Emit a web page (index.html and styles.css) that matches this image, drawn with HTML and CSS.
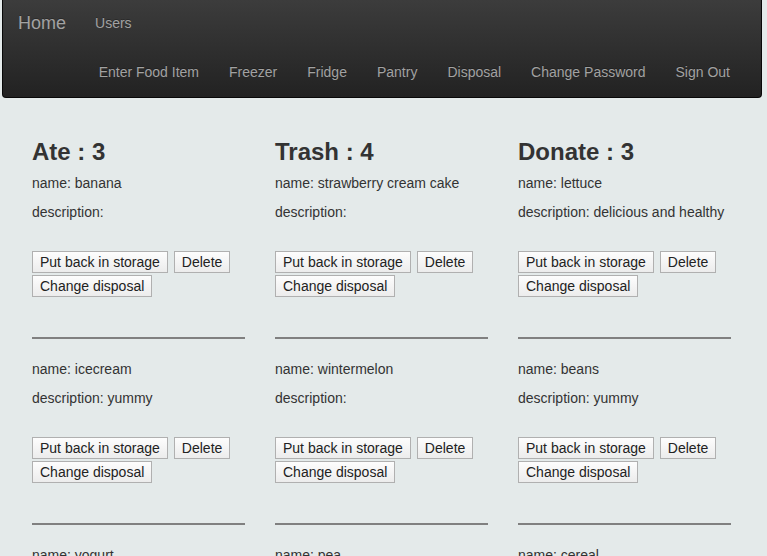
FILE: index.html
```html
<!DOCTYPE html>
<html>
<head>
<meta charset="utf-8">
<link rel="stylesheet" href="styles.css">
</head>
<body>
<nav class="navbar">
  <div class="nav-row top">
    <a class="brand">Home</a>
    <a class="nav-link">Users</a>
  </div>
  <div class="nav-row bottom">
    <a class="nav-link">Enter Food Item</a>
    <a class="nav-link">Freezer</a>
    <a class="nav-link">Fridge</a>
    <a class="nav-link">Pantry</a>
    <a class="nav-link">Disposal</a>
    <a class="nav-link">Change Password</a>
    <a class="nav-link">Sign Out</a>
  </div>
</nav>
<main class="columns">
  <section class="col">
    <h2>Ate : 3</h2>
    <div class="item">
      <p>name: banana</p>
      <p>description: </p>
      <div class="actions"><button>Put back in storage</button><button>Delete</button><button>Change disposal</button></div>
      <hr>
    </div>
    <div class="item">
      <p>name: icecream</p>
      <p>description: yummy</p>
      <div class="actions"><button>Put back in storage</button><button>Delete</button><button>Change disposal</button></div>
      <hr>
    </div>
    <div class="item">
      <p>name: yogurt</p>
      <p>description: </p>
    </div>
  </section>
  <section class="col">
    <h2>Trash : 4</h2>
    <div class="item">
      <p>name: strawberry cream cake</p>
      <p>description: </p>
      <div class="actions"><button>Put back in storage</button><button>Delete</button><button>Change disposal</button></div>
      <hr>
    </div>
    <div class="item">
      <p>name: wintermelon</p>
      <p>description: </p>
      <div class="actions"><button>Put back in storage</button><button>Delete</button><button>Change disposal</button></div>
      <hr>
    </div>
    <div class="item">
      <p>name: pea</p>
      <p>description: </p>
    </div>
  </section>
  <section class="col">
    <h2>Donate : 3</h2>
    <div class="item">
      <p>name: lettuce</p>
      <p>description: delicious and healthy</p>
      <div class="actions"><button>Put back in storage</button><button>Delete</button><button>Change disposal</button></div>
      <hr>
    </div>
    <div class="item">
      <p>name: beans</p>
      <p>description: yummy</p>
      <div class="actions"><button>Put back in storage</button><button>Delete</button><button>Change disposal</button></div>
      <hr>
    </div>
    <div class="item">
      <p>name: cereal</p>
      <p>description: </p>
    </div>
  </section>
</main>
</body>
</html>
```
FILE: styles.css
```css
* { box-sizing: border-box; }
html, body { margin: 0; padding: 0; }
body {
  background: #e4eaea;
  font-family: "Liberation Sans", Arial, Helvetica, sans-serif;
  font-size: 14px;
  line-height: 20px;
  color: #333;
  overflow: hidden;
  height: 556px;
}
.navbar {
  margin: 0 5px 0 2px;
  height: 98px;
  background: linear-gradient(to bottom, #3c3c3c 0, #222 100%);
  border: 1px solid #080808;
  border-top: none;
  border-radius: 0 0 4px 4px;
  display: flex;
  flex-direction: column;
}
.nav-row { display: flex; align-items: center; }
.nav-row.top { height: 45px; padding-left: 15px; }
.nav-row.bottom { height: 52px; justify-content: flex-end; padding-right: 31px; padding-top: 2px; }
.navbar a {
  color: #a2a2a2;
  text-shadow: 0 -1px 0 rgba(0,0,0,.25);
  text-decoration: none;
}
.brand { font-size: 18px; line-height: 20px; margin-right: 29px; }
.nav-link { font-size: 14px; line-height: 20px; }
.nav-row.bottom .nav-link { margin-left: 30px; }
.columns {
  display: grid;
  grid-template-columns: 213px 213px 213px;
  column-gap: 30px;
  padding-left: 32px;
  padding-top: 41px;
}
h2 {
  font-size: 24px;
  line-height: 26.4px;
  font-weight: bold;
  margin: 0 0 8px;
  color: #333;
}
p { margin: 0 0 9px; }
.actions {
  display: flex;
  flex-wrap: wrap;
  gap: 2px 6px;
  margin-top: 29px;
}
button {
  font-family: "Liberation Sans", Arial, Helvetica, sans-serif;
  font-size: 14px;
  line-height: 18px;
  height: 22px;
  padding: 1px 7px;
  color: #222;
  background: linear-gradient(to bottom, #fdfdfd 0, #ececec 100%);
  border: 1px solid #b0b0b0;
  border-radius: 0;
  margin: 0;
}
hr {
  border: none;
  border-top: 2px solid #808080;
  margin: 40px 0 20px;
  height: 0;
}
```
